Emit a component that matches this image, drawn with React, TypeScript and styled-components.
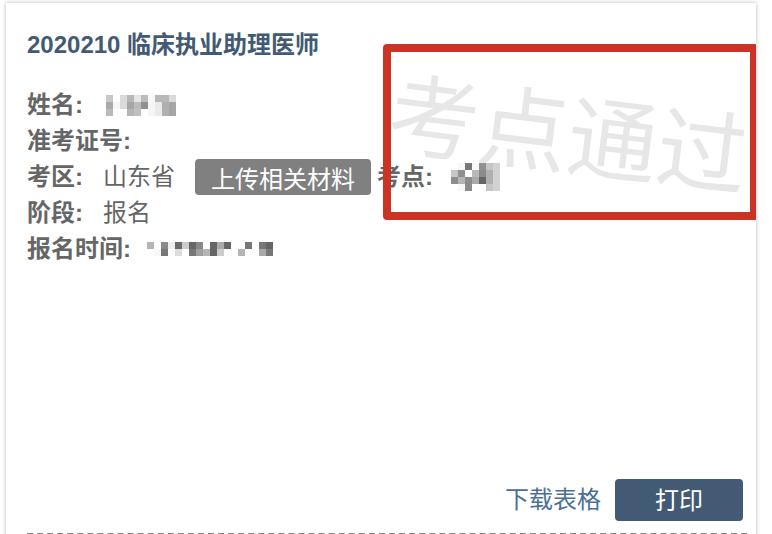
import React from "react";
import styled, { createGlobalStyle } from "styled-components";

const GlobalStyle = createGlobalStyle`
  * { box-sizing: border-box; }
  body {
    margin: 0;
    background: #fff;
    color: #666;
    font-family: "Liberation Sans", "Noto Sans CJK SC", sans-serif;
    font-size: 24px;
    line-height: 36px;
  }
`;

const Page = styled.main`
  height: 100vh;
  padding: 3px 16px 0 6px;
  overflow: hidden;
`;

const Card = styled.article`
  position: relative;
  padding: 0 9px 24px 21px;
  overflow: hidden;
  background: #fff;
  box-shadow: 0 0 4px rgba(0, 0, 0, 0.28);
`;

const Entry = styled.section`
  display: flex;
  flex-direction: column;
  min-height: calc(100vh - 2px);
  padding: 24px 0 12px;
  border-bottom: 2px dashed #888;
`;

const Title = styled.h1`
  position: relative;
  margin: 0 0 24px;
  color: #425a73;
  font-size: 24px;
  line-height: 36px;
`;

const Details = styled.dl`
  position: relative;
  margin: 0;
`;

const Row = styled.div`
  display: flex;
  align-items: center;
  height: 36px;
  white-space: nowrap;
`;

const Label = styled.dt`
  font-weight: 700;
`;

const Value = styled.dd<{ $gap?: number }>`
  display: flex;
  align-items: center;
  margin: 0 0 0 ${(p) => p.$gap ?? 20}px;
`;

const UploadButton = styled.button`
  height: 36px;
  margin: 0 6px 0 20px;
  padding: 3px 16px 0;
  border: 0;
  border-radius: 4px;
  background: #808080;
  color: #fff;
  font: inherit;
`;

const Actions = styled.footer`
  display: flex;
  align-items: center;
  justify-content: flex-end;
  gap: 14px;
  margin-top: auto;
  padding-right: 4px;
`;

const DownloadLink = styled.a`
  color: #4a7098;
  text-decoration: none;
`;

const PrintButton = styled.button`
  width: 128px;
  height: 42px;
  padding: 2px 0 0;
  border: 0;
  border-radius: 4px;
  background: #425a73;
  color: #fff;
  font: inherit;
`;

const Watermark = styled.div`
  position: absolute;
  top: 89px;
  right: 8px;
  color: #e7e7e7;
  font-size: 90px;
  line-height: 90px;
  white-space: nowrap;
  transform: rotate(7deg);
`;

const Highlight = styled.div`
  position: absolute;
  top: 41px;
  right: -2px;
  width: 375px;
  height: 176px;
  border: 8px solid #cb3425;
  border-radius: 4px;
  pointer-events: none;
`;

const Mosaic = styled.svg`
  display: block;
  flex: none;
`;

const cell = 7;

function Redacted({ label, rows }: { label: string; rows: string[] }) {
  const grid = rows.map((r) => r.split(" "));
  return (
    <Mosaic
      role="img"
      aria-label={label}
      width={grid[0].length * cell}
      height={grid.length * cell}
      shapeRendering="crispEdges"
    >
      {grid.map((r, y) =>
        r.map((shade, x) => (
          <rect
            key={`${x}-${y}`}
            x={x * cell}
            y={y * cell}
            width={cell}
            height={cell}
            fill={`#${shade}${shade}${shade}`}
          />
        ))
      )}
    </Mosaic>
  );
}

const nameCells = [
  "c8 ff d9 b8 e5 bb f8 b8 b8 da",
  "aa f5 da a5 bc 90 f5 e9 af a5",
  "bb ff ff b5 c0 ff f5 eb b0 a5",
];

const siteCells = [
  "ff f8 77 f8 90 c5 d2",
  "c5 90 ff b8 8c b0 d2",
  "8c b5 8c aa 66 b0 d2",
  "ff f8 8c ff ff c5 d2",
];

const timeCells = [
  "b5 ff 8a ee 6a cc 66 88 ff 66 aa 66 ff ff 77 ff 77 66",
  "ff f8 77 ff dd ff 77 a0 b5 66 cc ff ff b5 ff ff aa 77",
];

export default function App() {
  return (
    <>
      <GlobalStyle />
      <Page>
        <Card>
          <Watermark>考点通过</Watermark>
          <Entry>
            <Title>2020210 临床执业助理医师</Title>
            <Details>
              <Row>
                <Label>姓名:</Label>
                <Value $gap={23}>
                  <Redacted label="姓名" rows={nameCells} />
                </Value>
              </Row>
              <Row>
                <Label>准考证号:</Label>
              </Row>
              <Row>
                <Label>考区:</Label>
                <Value>
                  山东省
                  <UploadButton type="button">上传相关材料</UploadButton>
                </Value>
                <Label>考点:</Label>
                <Value $gap={18}>
                  <Redacted label="考点" rows={siteCells} />
                </Value>
              </Row>
              <Row>
                <Label>阶段:</Label>
                <Value>报名</Value>
              </Row>
              <Row>
                <Label>报名时间:</Label>
                <Value $gap={16}>
                  <Redacted label="报名时间" rows={timeCells} />
                </Value>
              </Row>
            </Details>
            <Actions>
              <DownloadLink href="#download">下载表格</DownloadLink>
              <PrintButton type="button">打印</PrintButton>
            </Actions>
          </Entry>
          <Highlight />
        </Card>
      </Page>
    </>
  );
}
